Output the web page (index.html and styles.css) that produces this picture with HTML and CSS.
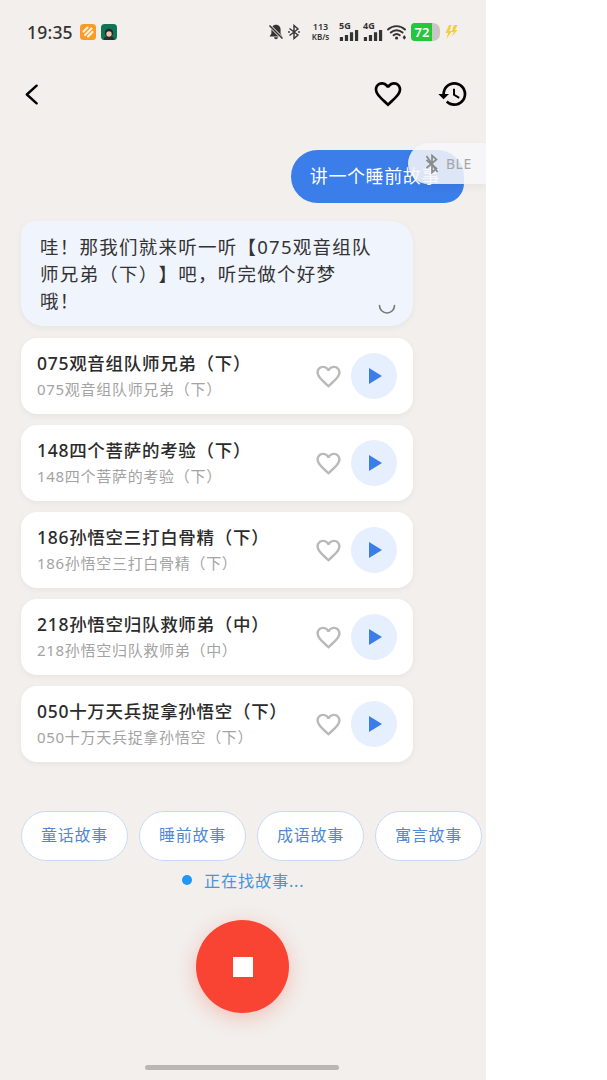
FILE: index.html
```html
<!DOCTYPE html>
<html lang="zh-CN">
<head>
<meta charset="utf-8" />
<title>故事</title>
<link rel="stylesheet" href="styles.css">
</head>
<body>
<div class="screen">

  <div class="status">
    <div class="status-left">
      <span class="time">19:35</span>
      <svg class="app" viewBox="0 0 16 16"><rect width="16" height="16" rx="3.5" fill="#fb9a25"/><path d="M3.500 7.500 7.500 3.500M5 11 11.500 4.500M8 12.500 12.500 8" stroke="#fff3df" stroke-width="2.200" stroke-linecap="round"/></svg>
      <svg class="app" viewBox="0 0 16 16"><rect width="16" height="16" rx="3.5" fill="#0f7558"/><path d="M2.500 16c0-2.800 2-4 5.500-4s5.500 1.200 5.500 4z" fill="#26322f"/><circle cx="8" cy="9" r="4.200" fill="#2a2422"/><circle cx="8" cy="10" r="2.700" fill="#eac7ad"/></svg>
    </div>
    <div class="status-right">
      <svg class="s-bell" viewBox="0 0 16 16"><path d="M8 .8C5.100.8 3.400 3 3.400 5.800v3.600L1.600 12.400h12.800l-1.800-3V5.800C12.600 3 10.900.8 8 .8zM6 13.300c.2 1.200 1 1.900 2 1.900s1.800-.7 2-1.900z" fill="#333"/><path d="M1.500 1.500 14.500 14.500" stroke="#f2efec" stroke-width="3"/><path d="M1.500 1.500 14.500 14.500" stroke="#333" stroke-width="1.500"/></svg>
      <svg class="s-bt" viewBox="0 0 12 16"><path d="M1.500 4.500 10 11 6 14.500v-13L10 5 1.500 11.500" fill="none" stroke="#333" stroke-width="1.400"/><circle cx="1" cy="8" r=".9" fill="#333"/><circle cx="11" cy="8" r=".9" fill="#333"/></svg>
      <div class="speed"><span>113</span><span>KB/s</span></div>
      <div class="net">
        <span class="net-label">5G</span>
        <svg viewBox="0 0 20 12"><path d="M0 7.500h3.500V12H0zM5.500 5.500H9V12H5.500zM11 2.500h3.500V12H11zM16.500 0H20v12h-3.500z" fill="#333"/></svg>
      </div>
      <div class="net">
        <span class="net-label">4G</span>
        <svg viewBox="0 0 20 12"><path d="M0 7.500h3.500V12H0zM5.500 5.500H9V12H5.500zM11 2.500h3.500V12H11zM16.500 0H20v12h-3.500z" fill="#333"/></svg>
      </div>
      <svg class="s-wifi" viewBox="0 0 20 16"><path d="M1 5.500C5.800 1 13.200 1 18 5.500M3.800 8.500c3.300-3 8.400-3 11.700 0M6.600 11.300c1.800-1.500 4.300-1.500 6.100 0" fill="none" stroke="#333" stroke-width="1.900" stroke-linecap="round"/><circle cx="9.600" cy="14" r="1.600" fill="#333"/><path d="M17.300 11l1.700 2.400-1.700 2.400-1.700-2.400z" fill="#333"/></svg>
      <div class="battery"><span class="battery-level">72</span></div>
      <svg class="s-bolt" viewBox="0 0 14 16"><path d="M5 1 1.500 9h2.500L2.500 15l5.500-8H5.500L7.500 1zM10 1 7.500 8H10l-2.500 5 6-7h-2.500L13.500 1z" fill="#f3cf3f"/></svg>
    </div>
  </div>

  <div class="header">
    <svg class="back" viewBox="0 0 14 22"><path d="M12.500 1.500 2 11l10.500 9.500" fill="none" stroke="#000" stroke-width="2.600" stroke-linecap="round" stroke-linejoin="round"/></svg>
    <div class="header-right">
      <svg class="head-heart" viewBox="0 0 24 24"><path d="M16.500 3c-1.740 0-3.410.81-4.500 2.090C10.910 3.810 9.240 3 7.500 3 4.420 3 2 5.420 2 8.500c0 3.780 3.400 6.860 8.550 11.540L12 21.350l1.450-1.320C18.600 15.360 22 12.280 22 8.500 22 5.420 19.580 3 16.500 3zm-4.400 15.550l-.1.100-.1-.100C7.140 14.240 4 11.390 4 8.500 4 6.500 5.500 5 7.500 5c1.540 0 3.040.990 3.570 2.360h1.870C13.460 5.990 14.960 5 16.500 5c2 0 3.500 1.500 3.500 3.500 0 2.890-3.140 5.740-7.900 10.050z" fill="#000"/></svg>
      <svg class="head-history" viewBox="0 0 24 24"><path d="M13 3a9 9 0 0 0-9 9H1l3.890 3.890.07.14L9 12H6c0-3.870 3.130-7 7-7s7 3.130 7 7-3.130 7-7 7c-1.930 0-3.680-.79-4.940-2.060l-1.420 1.420A8.954 8.954 0 0 0 13 21a9 9 0 0 0 0-18zm-1 5v5l4.280 2.540.72-1.210-3.500-2.080V8H12z" fill="#000"/></svg>
    </div>
  </div>

  <div class="chat">
    <div class="bubble-user">讲一个睡前故事</div>
    <div class="bubble-bot">
      哇！那我们就来听一听【075观音组队<br>师兄弟（下）】吧，听完做个好梦<br>哦！
      <svg class="spinner" viewBox="0 0 18 18"><path d="M1.500 7.500a7.500 7.500 0 0 0 15 0" fill="none" stroke="#777" stroke-width="1.600" stroke-linecap="round"/></svg>
    </div>

    <div class="list">
      <div class="card">
        <div class="card-text"><div class="card-title">075观音组队师兄弟（下）</div><div class="card-sub">075观音组队师兄弟（下）</div></div>
        <svg class="card-heart" viewBox="0 0 24 24"><path d="M16.500 3c-1.740 0-3.410.81-4.500 2.090C10.910 3.810 9.240 3 7.500 3 4.420 3 2 5.420 2 8.500c0 3.780 3.400 6.860 8.550 11.540L12 21.350l1.450-1.320C18.600 15.360 22 12.280 22 8.500 22 5.420 19.580 3 16.500 3zm-4.400 15.550l-.1.100-.1-.100C7.140 14.240 4 11.390 4 8.500 4 6.500 5.500 5 7.500 5c1.540 0 3.040.990 3.570 2.360h1.870C13.460 5.990 14.960 5 16.500 5c2 0 3.500 1.500 3.500 3.500 0 2.890-3.140 5.740-7.900 10.050z"/></svg>
        <div class="play"><span class="play-tri"></span></div>
      </div>
      <div class="card">
        <div class="card-text"><div class="card-title">148四个菩萨的考验（下）</div><div class="card-sub">148四个菩萨的考验（下）</div></div>
        <svg class="card-heart" viewBox="0 0 24 24"><path d="M16.500 3c-1.740 0-3.410.81-4.500 2.090C10.910 3.810 9.240 3 7.500 3 4.420 3 2 5.420 2 8.500c0 3.780 3.400 6.860 8.550 11.540L12 21.350l1.450-1.320C18.600 15.360 22 12.280 22 8.500 22 5.420 19.580 3 16.500 3zm-4.400 15.550l-.1.100-.1-.100C7.140 14.240 4 11.390 4 8.500 4 6.500 5.500 5 7.500 5c1.540 0 3.040.990 3.570 2.360h1.870C13.460 5.990 14.960 5 16.500 5c2 0 3.500 1.500 3.500 3.500 0 2.890-3.140 5.740-7.900 10.050z"/></svg>
        <div class="play"><span class="play-tri"></span></div>
      </div>
      <div class="card">
        <div class="card-text"><div class="card-title">186孙悟空三打白骨精（下）</div><div class="card-sub">186孙悟空三打白骨精（下）</div></div>
        <svg class="card-heart" viewBox="0 0 24 24"><path d="M16.500 3c-1.740 0-3.410.81-4.500 2.090C10.910 3.810 9.240 3 7.500 3 4.420 3 2 5.420 2 8.500c0 3.780 3.400 6.860 8.550 11.540L12 21.350l1.450-1.320C18.600 15.360 22 12.280 22 8.500 22 5.420 19.580 3 16.500 3zm-4.400 15.550l-.1.100-.1-.100C7.140 14.240 4 11.390 4 8.500 4 6.500 5.500 5 7.500 5c1.540 0 3.040.990 3.570 2.360h1.870C13.460 5.990 14.960 5 16.500 5c2 0 3.500 1.500 3.500 3.500 0 2.890-3.140 5.740-7.900 10.050z"/></svg>
        <div class="play"><span class="play-tri"></span></div>
      </div>
      <div class="card">
        <div class="card-text"><div class="card-title">218孙悟空归队救师弟（中）</div><div class="card-sub">218孙悟空归队救师弟（中）</div></div>
        <svg class="card-heart" viewBox="0 0 24 24"><path d="M16.500 3c-1.740 0-3.410.81-4.500 2.090C10.910 3.810 9.240 3 7.500 3 4.420 3 2 5.420 2 8.500c0 3.780 3.400 6.860 8.550 11.540L12 21.350l1.450-1.320C18.600 15.360 22 12.280 22 8.500 22 5.420 19.580 3 16.500 3zm-4.400 15.550l-.1.100-.1-.100C7.140 14.240 4 11.390 4 8.500 4 6.500 5.500 5 7.500 5c1.540 0 3.040.990 3.570 2.360h1.870C13.460 5.990 14.960 5 16.500 5c2 0 3.500 1.500 3.500 3.500 0 2.890-3.140 5.740-7.900 10.050z"/></svg>
        <div class="play"><span class="play-tri"></span></div>
      </div>
      <div class="card">
        <div class="card-text"><div class="card-title">050十万天兵捉拿孙悟空（下）</div><div class="card-sub">050十万天兵捉拿孙悟空（下）</div></div>
        <svg class="card-heart" viewBox="0 0 24 24"><path d="M16.500 3c-1.740 0-3.410.81-4.500 2.090C10.910 3.810 9.240 3 7.500 3 4.420 3 2 5.420 2 8.500c0 3.780 3.400 6.860 8.550 11.540L12 21.350l1.450-1.320C18.600 15.360 22 12.280 22 8.500 22 5.420 19.580 3 16.500 3zm-4.400 15.550l-.1.100-.1-.100C7.140 14.240 4 11.390 4 8.500 4 6.500 5.500 5 7.500 5c1.540 0 3.040.990 3.570 2.360h1.870C13.460 5.990 14.960 5 16.500 5c2 0 3.500 1.500 3.500 3.500 0 2.890-3.140 5.740-7.900 10.050z"/></svg>
        <div class="play"><span class="play-tri"></span></div>
      </div>
    </div>
  </div>

  <div class="chips">
    <div class="chip">童话故事</div>
    <div class="chip">睡前故事</div>
    <div class="chip">成语故事</div>
    <div class="chip">寓言故事</div>
  </div>

  <div class="finding"><span class="finding-dot"></span><span>正在找故事...</span></div>

  <div class="stop"><span class="stop-square"></span></div>

  <div class="home-bar"></div>

  <div class="ble">
    <svg viewBox="0 0 14 20"><path d="M1.500 6 11.500 14.500 7 18.500v-17L11.500 5.500 1.500 14" fill="none" stroke="#8a8a8a" stroke-width="1.700"/><path d="M1.500 2 12.500 18" stroke="#8a8a8a" stroke-width="1.700"/></svg>
    <span>BLE</span>
  </div>
</div>
</body>
</html>
```

FILE: styles.css
```css
body{margin:0;background:#fff;font-family:"Noto Sans","Noto Sans CJK SC",sans-serif;text-spacing-trim:space-all;}

.screen{width:486px;height:1080px;background:#f2efec;position:relative;overflow:hidden;display:flex;flex-direction:column;}

/* status bar */
.status{height:64px;display:flex;align-items:center;justify-content:space-between;padding:0 28px 0 27px;box-sizing:border-box;flex:none;}
.status-left{display:flex;align-items:center;}
.time{font-size:17.500px;font-weight:500;color:#333;margin-right:7px;letter-spacing:.2px;}
.app{width:16px;height:16px;margin-right:5px;}
.status-right{display:flex;align-items:center;}
.s-bell{width:16px;height:16px;margin-right:4px;}
.s-bt{width:12px;height:16px;margin-right:10px;}
.speed{display:flex;flex-direction:column;align-items:center;font-size:8px;line-height:10px;font-weight:600;color:#333;width:21px;margin-right:8px;}
.speed span:first-child{font-size:9px;}
.net{width:20px;height:18px;position:relative;margin-right:4px;}
.net svg{width:20px;height:11px;position:absolute;left:0;bottom:0;}
.net-label{position:absolute;left:0;top:-2px;font-size:9px;line-height:10px;font-weight:700;color:#333;}
.s-wifi{width:20px;height:16px;margin-right:4px;}
.battery{width:29px;height:18px;border-radius:4px 7px 7px 4px;background:#c9c6c4;overflow:hidden;margin-right:4px;}
.battery-level{display:block;width:20px;height:18px;padding-left:1px;background:#22c73d;color:#fff;font-size:13px;line-height:18px;font-weight:600;text-align:center;}
.s-bolt{width:14px;height:16px;}

/* header */
.header{height:60px;display:flex;align-items:center;justify-content:space-between;padding:0 17px 0 25px;box-sizing:border-box;flex:none;}
.back{width:13px;height:21px;}
.header-right{display:flex;align-items:center;gap:33px;}
.head-heart{width:32px;height:32px;}
.head-history{width:32px;height:32px;}

/* chat */
.chat{padding:26px 21px 0;display:flex;flex-direction:column;flex:none;}
.bubble-user{align-self:flex-end;height:53px;box-sizing:border-box;margin-right:1px;padding:0 24px 0 19px;border-radius:27px 27px 20px 27px;background:#3b7de9;color:#fff;font-size:18px;letter-spacing:.6px;line-height:53px;white-space:nowrap;}
.bubble-bot{margin-top:18px;width:392px;height:105px;box-sizing:border-box;padding:12px 19px;background:#f0f4fd;border-radius:14px 22px 22px 22px;color:#333;font-size:18.500px;letter-spacing:1.250px;line-height:27px;position:relative;box-shadow:0 2px 6px rgba(0,0,0,.05);}
.spinner{position:absolute;right:17px;bottom:10px;width:18px;height:18px;}

.list{margin-top:12px;display:flex;flex-direction:column;gap:11px;}
.card{width:392px;height:76px;box-sizing:border-box;padding:0 16px;background:#fff;border-radius:16px;display:flex;align-items:center;box-shadow:0 2px 6px rgba(0,0,0,.05);}
.card-text{flex:1;min-width:0;white-space:nowrap;}
.card-title{font-size:17.500px;letter-spacing:.7px;line-height:26px;font-weight:500;color:#2b2b2b;}
.card-sub{font-size:15px;letter-spacing:.7px;line-height:26px;color:#a3a3a3;}
.card-heart{width:29px;height:29px;fill:#b9b9b9;margin-right:8px;flex:none;}
.play{width:46px;height:46px;border-radius:50%;background:#e6effd;display:flex;align-items:center;justify-content:center;flex:none;}
.play-tri{width:0;height:0;margin-left:2px;border-style:solid;border-width:8px 0 8px 13px;border-color:transparent transparent transparent #3b7de9;}

/* chips */
.chips{margin-top:49px;padding-left:21px;display:flex;gap:11px;flex:none;}
.chip{width:107px;height:50px;box-sizing:border-box;border:1.500px solid #c9dbf4;border-radius:25px;background:#fff;color:#5089d2;font-size:16px;letter-spacing:.8px;line-height:47px;text-align:center;white-space:nowrap;}

.finding{margin-top:8px;height:22px;padding-left:182px;display:flex;align-items:center;gap:12px;color:#4a94d8;font-size:16.200px;letter-spacing:.8px;flex:none;}
.finding-dot{width:10px;height:10px;border-radius:50%;background:#2196f3;}

.stop{margin:29px 0 0 196px;width:93px;height:93px;border-radius:50%;background:#f94434;display:flex;align-items:center;justify-content:center;box-shadow:0 5px 20px rgba(249,68,52,.28);flex:none;}
.stop-square{width:20px;height:20px;background:#fff;}

.home-bar{margin:52px 0 0 145px;width:194px;height:5px;border-radius:3px;background:#b9b7b4;flex:none;}

/* floating BLE tab, sits over the chat */
.ble{position:absolute;right:0;top:143px;width:78px;height:41px;box-sizing:border-box;padding-left:17px;border-radius:21px 0 0 21px;background:rgba(247,247,249,.86);display:flex;align-items:center;gap:7px;color:#a5a5a5;font-size:14px;letter-spacing:.5px;box-shadow:0 3px 8px rgba(0,0,0,.06);}
.ble svg{width:14px;height:20px;}
```
